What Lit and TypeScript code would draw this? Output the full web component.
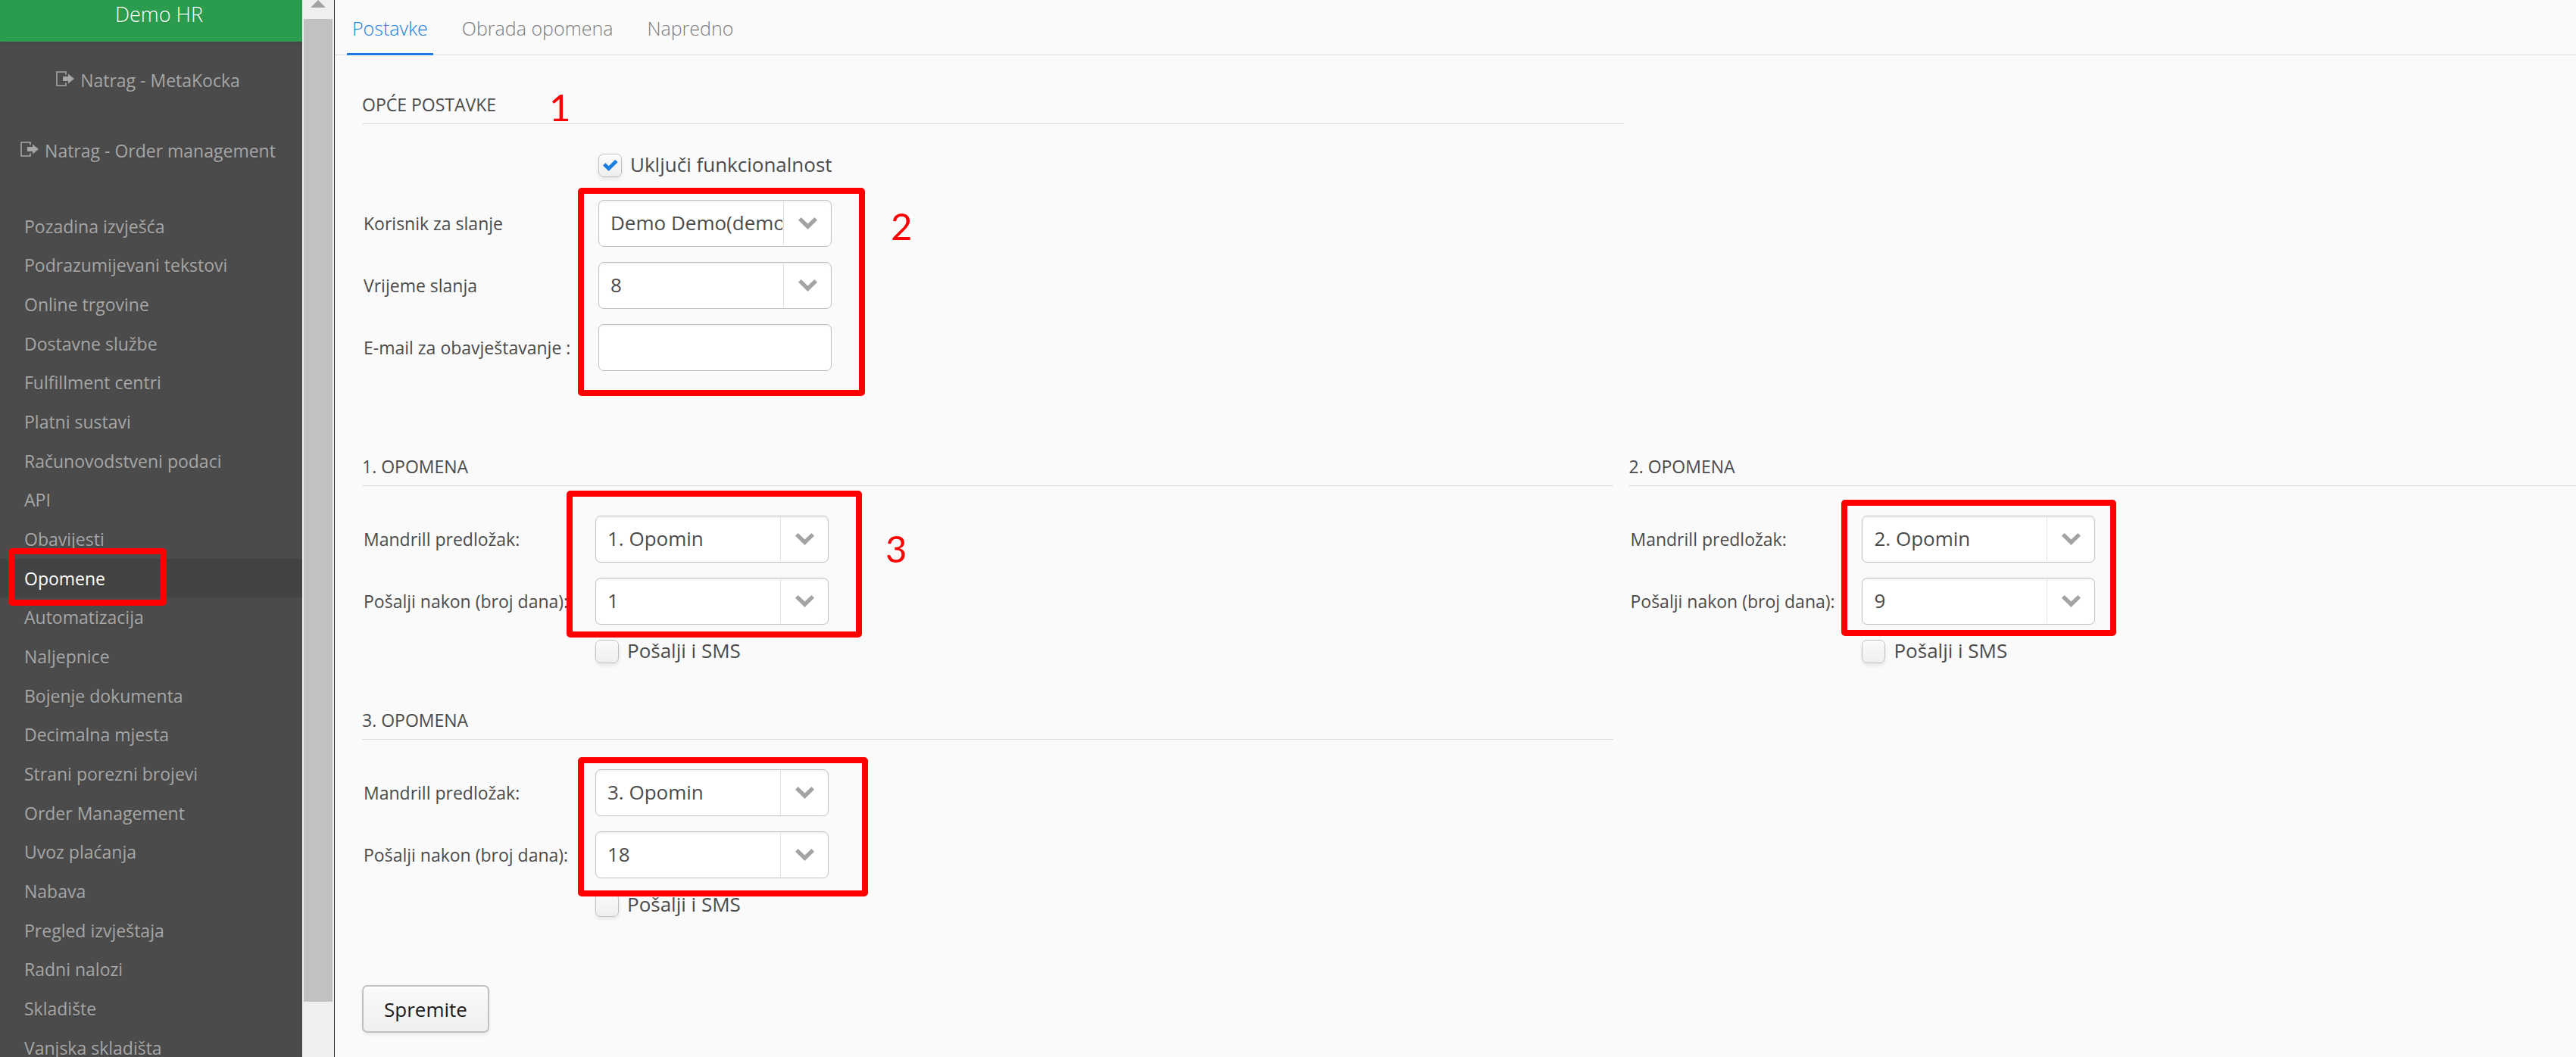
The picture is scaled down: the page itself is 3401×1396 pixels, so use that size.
import { LitElement, html, css, svg, nothing } from "lit";
import { customElement } from "lit/decorators.js";
import { classMap } from "lit/directives/class-map.js";

const MENU = [
  "Pozadina izvješća",
  "Podrazumijevani tekstovi",
  "Online trgovine",
  "Dostavne službe",
  "Fulfillment centri",
  "Platni sustavi",
  "Računovodstveni podaci",
  "API",
  "Obavijesti",
  "Opomene",
  "Automatizacija",
  "Naljepnice",
  "Bojenje dokumenta",
  "Decimalna mjesta",
  "Strani porezni brojevi",
  "Order Management",
  "Uvoz plaćanja",
  "Nabava",
  "Pregled izvještaja",
  "Radni nalozi",
  "Skladište",
  "Vanjska skladišta",
];

const BACK_LINKS = ["Natrag - MetaKocka", "Natrag - Order management"];
const TABS = ["Postavke", "Obrada opomena", "Napredno"];

interface Reminder {
  id: number;
  template: string;
  days: string;
}

const REMINDERS: Reminder[] = [
  { id: 1, template: "1. Opomin", days: "1" },
  { id: 2, template: "2. Opomin", days: "9" },
  { id: 3, template: "3. Opomin", days: "18" },
];

@customElement("app-root")
export class AppRoot extends LitElement {
  static styles = css`
    :host {
      display: block;
      font-family: "Open Sans", "Noto Sans", sans-serif;
      font-size: 23px;
      line-height: 32px;
      color: #4b4b4b;
    }
    * {
      box-sizing: border-box;
    }
    .shell {
      display: flex;
      height: 100vh;
      overflow: hidden;
      background: #fafafa;
    }

    /* Sidebar */
    .sidebar {
      flex: 0 0 399px;
      background: #4b4b4b;
      color: #a6a6a6;
      text-shadow: 0 2px 0 rgba(0, 0, 0, 0.08);
      overflow: hidden;
    }
    .brand {
      height: 55px;
      padding-left: 21px;
      background: #2b9b4d;
      color: #fff;
      font-size: 27px;
      font-weight: 300;
      line-height: 38px;
      text-align: center;
      box-shadow: 0 2px 4px rgba(0, 0, 0, 0.12);
    }
    .back {
      display: flex;
      flex-direction: column;
      padding: 4px 8px 28px 0;
    }
    .back-link {
      display: flex;
      align-items: center;
      justify-content: center;
      gap: 8px;
      height: 93px;
      color: inherit;
      text-decoration: none;
    }
    .exit-icon {
      width: 24px;
      height: 20px;
      margin-bottom: 4px;
    }
    .menu {
      margin: 0;
      padding: 0;
      list-style: none;
    }
    .menu-item {
      position: relative;
      height: 52px;
    }
    .menu-item:nth-child(3n + 1) {
      height: 51px;
    }
    .menu-link {
      display: flex;
      align-items: center;
      height: 100%;
      padding-left: 32px;
      color: inherit;
      text-decoration: none;
    }
    .menu-item.active {
      background: #434343;
      color: #fff;
    }

    /* Scroll track */
    .track {
      flex: 0 0 43px;
      display: flex;
      flex-direction: column;
      padding: 0 2px;
      background: #f0f0f0;
      border-right: 1px solid #333;
    }
    .track-arrow {
      flex: 0 0 25px;
      width: 20px;
      align-self: center;
    }
    .track-arrow svg {
      display: block;
    }
    .track-thumb {
      flex: 0 1 93%;
      background: #c1c1c1;
    }

    /* Main */
    .main {
      flex: 1;
      min-width: 0;
      display: flex;
      flex-direction: column;
    }
    .tabs {
      display: flex;
      gap: 31px;
      height: 73px;
      padding-left: 16px;
      border-bottom: 1px solid #ddd;
    }
    .tab {
      height: 73px;
      margin: 0;
      padding: 4px 7px 0;
      border: 0;
      border-bottom: 3px solid transparent;
      background: none;
      color: #7b7b7b;
      font: 300 25px/36px "Open Sans", "Noto Sans", sans-serif;
    }
    .tab.active {
      color: #197de1;
      border-bottom-color: #197de1;
    }
    .content {
      padding: 49px 0 0 36px;
    }
    .general {
      width: 57%;
      margin-bottom: 110px;
    }
    .reminders {
      display: grid;
      grid-template-columns: 37fr 28fr;
      gap: 59px 20px;
    }
    .section {
      position: relative;
      --label-width: 308px;
    }
    .general {
      --label-width: 312px;
    }
    .title {
      margin: 0 0 39px;
      padding-bottom: 9px;
      border-bottom: 1px solid #ddd;
      font-size: 23px;
      font-weight: 400;
      text-transform: uppercase;
    }
    .fields {
      display: flex;
      flex-direction: column;
      gap: 20px;
    }
    .general .fields {
      margin-top: 30px;
    }
    .row {
      display: flex;
      align-items: center;
    }
    .label {
      flex: 0 0 var(--label-width);
      padding-left: 2px;
      white-space: nowrap;
    }
    .select-box {
      position: relative;
      width: 308px;
    }
    .control {
      display: block;
      width: 308px;
      height: 62px;
      margin: 0;
      padding: 0 15px;
      border: 1px solid #c0c0c0;
      border-radius: 7px;
      background: #fff;
      box-shadow: inset 0 2px 2px rgba(0, 0, 0, 0.05);
      color: #4b4b4b;
      font: 400 26px/36px "Open Sans", "Noto Sans", sans-serif;
      appearance: none;
    }
    select.control {
      padding-right: 64px;
      padding-bottom: 2px;
    }
    .drop {
      position: absolute;
      inset: 2px 1px 2px auto;
      width: 63px;
      display: flex;
      align-items: center;
      justify-content: center;
      border-left: 1px solid #e0e0e0;
      pointer-events: none;
    }
    .check-row {
      display: flex;
      gap: 11px;
      height: 31px;
      margin-left: var(--label-width);
      font-size: 26px;
      line-height: 28px;
    }
    .check {
      position: relative;
      width: 31px;
      height: 31px;
    }
    .check-input {
      display: block;
      width: 31px;
      height: 31px;
      margin: 0;
      appearance: none;
      border: 1px solid #c0c0c0;
      border-radius: 7px;
      background: linear-gradient(#fafafa, #efefef);
      box-shadow: inset 0 2px 0 #fff, 0 3px 5px rgba(0, 0, 0, 0.08);
    }
    .tick {
      position: absolute;
      left: 6px;
      top: 8px;
      pointer-events: none;
    }
    .save {
      display: block;
      height: 63px;
      margin: 90px 0 0;
      padding: 0 27px;
      border: 2px solid #c0c0c0;
      border-radius: 7px;
      background: linear-gradient(#fafafa, #efefef);
      box-shadow: inset 0 2px 0 #fff, 0 3px 5px rgba(0, 0, 0, 0.06);
      color: #191919;
      font: 400 26px/36px "Open Sans", "Noto Sans", sans-serif;
    }

    /* Callouts drawn over the form */
    .frame {
      position: absolute;
      border: 8px solid #f00;
      border-radius: 5px;
      pointer-events: none;
    }
    .frame-menu {
      left: 11px;
      top: -14px;
      width: 209px;
      height: 76px;
      z-index: 1;
    }
    .frame-general {
      left: 285px;
      top: 126px;
      width: 379px;
      height: 275px;
    }
    .frame-1 {
      left: 270px;
      top: 48px;
      width: 390px;
      height: 194px;
    }
    .frame-2 {
      left: 281px;
      top: 60px;
      width: 363px;
      height: 180px;
    }
    .frame-3 {
      left: 285px;
      top: 65px;
      width: 383px;
      height: 184px;
    }
    .step {
      position: absolute;
      color: #f00;
      font-family: Lato, "Open Sans", sans-serif;
      font-size: 49px;
      line-height: 60px;
      pointer-events: none;
    }
    .step-1 {
      left: 247px;
      top: -11px;
    }
    .step-2 {
      left: 698px;
      top: 146px;
    }
    .step-3 {
      left: 691px;
      top: 94px;
    }
  `;

  private select(id: string, value: string) {
    return html`<div class="select-box">
      <select class="control" id=${id}>
        <option selected>${value}</option>
      </select>
      <span class="drop" aria-hidden="true">
        <svg width="25" height="16" viewBox="0 0 25 16">
          <path d="M3.6 0 L12.5 8.4 L21.4 0 L25 3.8 L12.5 16 L0 3.8 Z" fill="#a3a3a3" />
        </svg>
      </span>
    </div>`;
  }

  private selectRow(id: string, label: string, value: string) {
    return html`<div class="row">
      <label class="label" for=${id}>${label}</label>
      ${this.select(id, value)}
    </div>`;
  }

  private checkRow(id: string, label: string, checked: boolean) {
    return html`<div class="check-row">
      <span class="check">
        <input class="check-input" type="checkbox" id=${id} ?checked=${checked} />
        ${checked
          ? html`<svg class="tick" width="20" height="15" viewBox="0 0 20 15">
              ${svg`<path d="M0 7.6 L3.4 4.2 L7.6 8.2 L16.2 0 L19.6 3.3 L7.6 15 Z" fill="#197de1" />`}
            </svg>`
          : nothing}
      </span>
      <label for=${id}>${label}</label>
    </div>`;
  }

  private reminder(r: Reminder) {
    return html`<section class="section">
      <h2 class="title">${r.id}. Opomena</h2>
      <div class="fields">
        ${this.selectRow(`template-${r.id}`, "Mandrill predložak:", r.template)}
        ${this.selectRow(`days-${r.id}`, "Pošalji nakon (broj dana):", r.days)}
        ${this.checkRow(`sms-${r.id}`, "Pošalji i SMS", false)}
      </div>
      <span class="frame frame-${r.id}"></span>
      ${r.id === 1 ? html`<span class="step step-3">3</span>` : nothing}
    </section>`;
  }

  render() {
    return html`<div class="shell">
      <aside class="sidebar">
        <div class="brand">Demo HR</div>
        <div class="back">
          ${BACK_LINKS.map(
            (text) => html`<a class="back-link" href="#">
              <svg class="exit-icon" viewBox="0 0 24 20" aria-hidden="true">
                <path
                  d="M13 4.5 V1 H1 V19 H13 V15.5"
                  fill="none"
                  stroke="#a6a6a6"
                  stroke-width="1.6"
                />
                <path d="M9 7 H16 V3.5 L24 10 L16 16.5 V13 H9 Z" fill="#a6a6a6" />
              </svg>
              <span>${text}</span>
            </a>`
          )}
        </div>
        <ul class="menu">
          ${MENU.map((text) => {
            const active = text === "Opomene";
            return html`<li class=${classMap({ "menu-item": true, active })}>
              <a class="menu-link" href="#">${text}</a>
              ${active ? html`<span class="frame frame-menu"></span>` : nothing}
            </li>`;
          })}
        </ul>
      </aside>
      <div class="track" aria-hidden="true">
        <div class="track-arrow">
          <svg width="20" height="10" viewBox="0 0 20 10">
            <path d="M10 0 L20 10 H0 Z" fill="#a3a3a3" />
          </svg>
        </div>
        <div class="track-thumb"></div>
      </div>
      <main class="main">
        <nav class="tabs">
          ${TABS.map(
            (text, i) =>
              html`<button class=${classMap({ tab: true, active: i === 0 })}>${text}</button>`
          )}
        </nav>
        <form class="content" @submit=${(e: Event) => e.preventDefault()}>
          <section class="section general">
            <h2 class="title">Opće postavke</h2>
            ${this.checkRow("enabled", "Uključi funkcionalnost", true)}
            <div class="fields">
              ${this.selectRow("sender", "Korisnik za slanje", "Demo Demo(demo)")}
              ${this.selectRow("hour", "Vrijeme slanja", "8")}
              <div class="row">
                <label class="label" for="email">E-mail za obavještavanje :</label>
                <input class="control" type="email" id="email" />
              </div>
            </div>
            <span class="frame frame-general"></span>
            <span class="step step-1">1</span>
            <span class="step step-2">2</span>
          </section>
          <div class="reminders">${REMINDERS.map((r) => this.reminder(r))}</div>
          <button class="save" type="submit">Spremite</button>
        </form>
      </main>
    </div>`;
  }
}
